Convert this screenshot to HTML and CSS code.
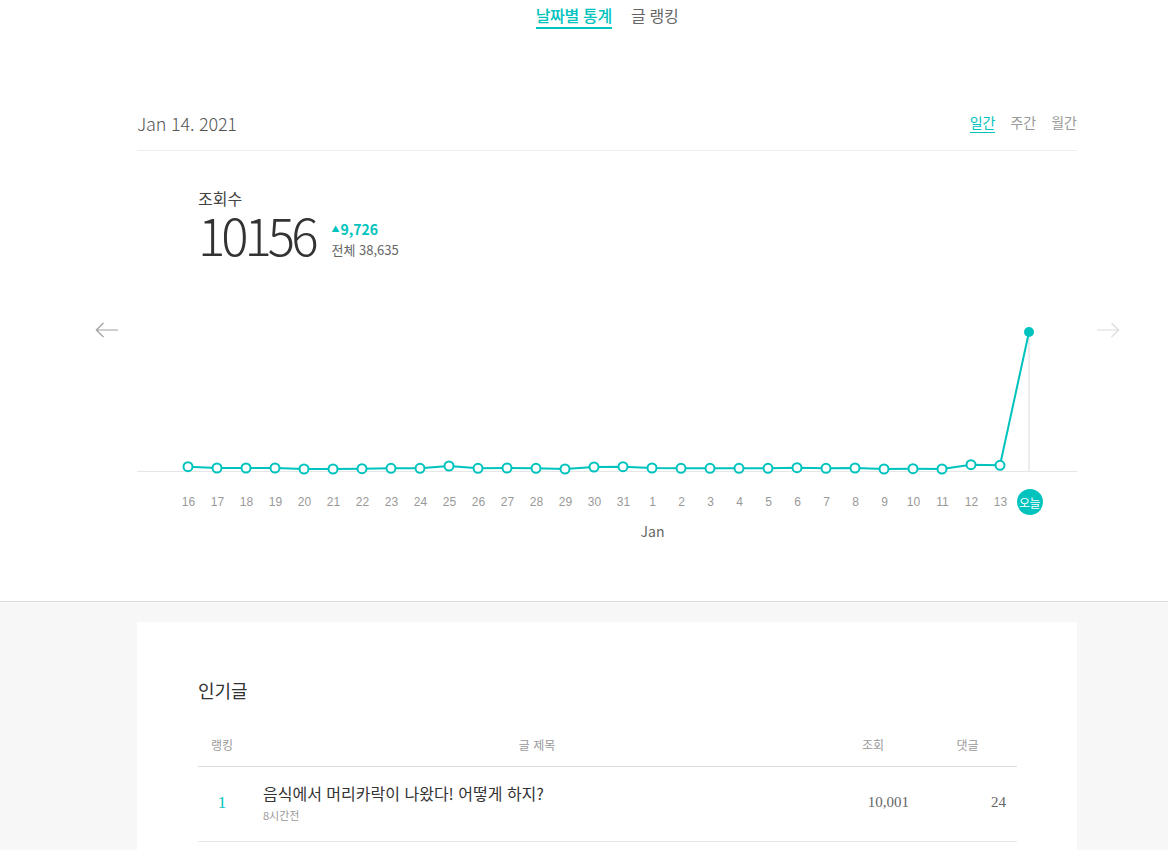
FILE: index.html
```html
<!DOCTYPE html>
<html lang="ko">
<head>
<meta charset="utf-8">
<title>통계</title>
<link rel="stylesheet" href="styles.css">
</head>
<body>
<section class="top">
  <nav class="tabs">
    <a class="tab active">날짜별 통계</a>
    <a class="tab">글 랭킹</a>
  </nav>
  <div class="wrap">
    <div class="head">
      <div class="date">Jan 14. 2021</div>
      <div class="periods">
        <a class="period active">일간</a>
        <a class="period">주간</a>
        <a class="period">월간</a>
      </div>
    </div>
    <div class="stats">
      <div class="stat-label">조회수</div>
      <div class="stat-row">
        <div class="stat-num">10156</div>
        <div class="stat-side">
          <div class="delta"><span class="tri">▲</span>9,726</div>
          <div class="total">전체 38,635</div>
        </div>
      </div>
    </div>
    <div class="chart">
      <svg class="arrow arrow-left" width="24" height="16" viewBox="0 0 24 16"><path d="M1 8H23M8.5 1L1.3 8L8.5 15" fill="none" stroke="#a0a0a0" stroke-width="1.2"/></svg>
      <svg class="arrow arrow-right" width="24" height="16" viewBox="0 0 24 16"><path d="M1 8H23M15.5 1L22.7 8L15.5 15" fill="none" stroke="#dcdcdc" stroke-width="1.2"/></svg>
      <svg class="plot" width="940" height="175" viewBox="0 0 940 175">
        <line x1="0" y1="171.5" x2="940" y2="171.5" stroke="#e6e6e6" stroke-width="1"/>
        <line x1="892" y1="32" x2="892" y2="171" stroke="#e6e6e6" stroke-width="1.5"/>
        <polyline fill="none" stroke="#00c3bd" stroke-width="2" points="51,166.7 80,168 109,168 138,168 167,169 196,169 225,168.7 254,168.3 283,168.3 312,166 341,168.3 370,168 399,168.3 428,169 457,167 486,166.7 515,168 544,168.3 573,168.3 602,168.3 631,168.3 660,167.7 689,168.3 718,168 747,169 776,168.7 805,169 834,164.7 863,165.3 892,32"/>
        <g fill="#fff" stroke="#00c3bd" stroke-width="2">
          <circle cx="51" cy="166.7" r="4.5"/><circle cx="80" cy="168" r="4.5"/><circle cx="109" cy="168" r="4.5"/><circle cx="138" cy="168" r="4.5"/><circle cx="167" cy="169" r="4.5"/><circle cx="196" cy="169" r="4.5"/><circle cx="225" cy="168.7" r="4.5"/><circle cx="254" cy="168.3" r="4.5"/><circle cx="283" cy="168.3" r="4.5"/><circle cx="312" cy="166" r="4.5"/><circle cx="341" cy="168.3" r="4.5"/><circle cx="370" cy="168" r="4.5"/><circle cx="399" cy="168.3" r="4.5"/><circle cx="428" cy="169" r="4.5"/><circle cx="457" cy="167" r="4.5"/><circle cx="486" cy="166.7" r="4.5"/><circle cx="515" cy="168" r="4.5"/><circle cx="544" cy="168.3" r="4.5"/><circle cx="573" cy="168.3" r="4.5"/><circle cx="602" cy="168.3" r="4.5"/><circle cx="631" cy="168.3" r="4.5"/><circle cx="660" cy="167.7" r="4.5"/><circle cx="689" cy="168.3" r="4.5"/><circle cx="718" cy="168" r="4.5"/><circle cx="747" cy="169" r="4.5"/><circle cx="776" cy="168.7" r="4.5"/><circle cx="805" cy="169" r="4.5"/><circle cx="834" cy="164.7" r="4.5"/><circle cx="863" cy="165.3" r="4.5"/>
        </g>
        <circle cx="892" cy="32" r="5" fill="#00c3bd"/>
      </svg>
      <div class="labels">
        <span>16</span><span>17</span><span>18</span><span>19</span><span>20</span><span>21</span><span>22</span><span>23</span><span>24</span><span>25</span><span>26</span><span>27</span><span>28</span><span>29</span><span>30</span><span>31</span><span>1</span><span>2</span><span>3</span><span>4</span><span>5</span><span>6</span><span>7</span><span>8</span><span>9</span><span>10</span><span>11</span><span>12</span><span>13</span><span class="today"><b>오늘</b></span>
        <span class="month">Jan</span>
      </div>
    </div>
  </div>
</section>
<section class="bottom">
  <div class="card">
    <h2 class="card-title">인기글</h2>
    <div class="table">
      <div class="trow thead">
        <div class="c-rank">랭킹</div>
        <div class="c-title">글 제목</div>
        <div class="c-views">조회</div>
        <div class="c-cmt">댓글</div>
      </div>
      <div class="trow tbody">
        <div class="c-rank rank">1</div>
        <div class="c-title post">
          <div class="post-title">음식에서 머리카락이 나왔다! 어떻게 하지?</div>
          <div class="post-time">8시간전</div>
        </div>
        <div class="c-views num">10,001</div>
        <div class="c-cmt num">24</div>
      </div>
    </div>
  </div>
</section>
</body>
</html>
```
FILE: styles.css
```css
* { box-sizing: border-box; }
html, body { margin: 0; padding: 0; background: #fff; }
body {
  font-family: "Noto Sans CJK KR", "Noto Sans", sans-serif;
  color: #333;
  width: 1168px;
  height: 850px;
  overflow: hidden;
}
a { cursor: pointer; }

.tabs {
  width: 940px;
  margin-left: 137px;
  display: flex;
  justify-content: center;
  gap: 19px;
}
.tab {
  font-size: 16px;
  line-height: 22px;
  padding-top: 4px;
  padding-bottom: 1px;
  border-bottom: 2px solid transparent;
  color: #666;
  letter-spacing: -0.3px;
}
.tab.active {
  color: #00c3bd;
  font-weight: 500;
  border-bottom-color: #00c3bd;
}

.wrap {
  width: 940px;
  margin-left: 137px;
}
.head {
  margin-top: 81px;
  display: flex;
  justify-content: space-between;
  align-items: center;
  padding-bottom: 14px;
  border-bottom: 1px solid #eee;
}
.date {
  font-size: 18px;
  line-height: 26px;
  font-weight: 300;
  color: #555;
  letter-spacing: -0.2px;
}
.periods {
  display: flex;
  gap: 15px;
}
.period {
  font-size: 14px;
  line-height: 19px;
  color: #999;
  border-bottom: 1px solid transparent;
}
.period.active {
  color: #00c3bd;
  border-bottom-color: #00c3bd;
}

.stats {
  margin-left: 61px;
  margin-top: 36px;
}
.stat-label {
  font-size: 16px;
  line-height: 22px;
  color: #444;
}
.stat-row {
  display: flex;
  align-items: flex-start;
  margin-top: 3px;
}
.stat-num {
  font-size: 51px;
  line-height: 44px;
  font-weight: 200;
  letter-spacing: -4px;
  color: #333;
}
.stat-side {
  margin-left: 17px;
  margin-top: 7px;
}
.delta {
  font-size: 14px;
  line-height: 20px;
  font-weight: 700;
  color: #00c3bd;
}
.tri {
  font-size: 8px;
  vertical-align: 3px;
  margin-right: 1px;
}
.total {
  font-size: 13px;
  line-height: 20px;
  color: #666;
  margin-top: 1px;
}

.chart {
  position: relative;
  margin-top: 40px;
}
.plot { display: block; }
.arrow { position: absolute; top: 22px; }
.arrow-left { left: -42px; }
.arrow-right { right: -43px; }

.labels {
  margin-top: 14px;
  margin-left: 37px;
  display: grid;
  grid-template-columns: repeat(30, 29px);
  grid-auto-rows: 26px;
  row-gap: 3px;
  align-items: center;
  justify-items: center;
  font-family: "Liberation Sans", Arial, sans-serif;
  font-size: 12px;
  color: #999;
}
.labels .today b {
  display: flex;
  align-items: center;
  justify-content: center;
  width: 26px;
  height: 26px;
  border-radius: 50%;
  background: #00c3bd;
  color: #fff;
  font-family: "Noto Sans CJK KR", sans-serif;
  font-weight: 400;
  font-size: 12px;
  letter-spacing: -0.5px;
}
.labels .month {
  grid-column: 17;
  grid-row: 2;
  font-family: "Noto Sans CJK KR", sans-serif;
  font-size: 14px;
  color: #666;
}

.top {
  height: 602px;
  border-bottom: 1px solid #ddd;
}
.bottom {
  background: #f7f7f7;
  padding-top: 20px;
  height: 248px;
}
.card {
  width: 940px;
  margin-left: 137px;
  background: #fff;
  padding: 55px 60px 0 61px;
  height: 240px;
}
.card-title {
  margin: 0;
  font-size: 18px;
  line-height: 26px;
  font-weight: 400;
  color: #333;
}
.table { margin-top: 33px; }
.trow {
  display: grid;
  grid-template-columns: 48px 582px 90px 99px;
  align-items: center;
  border-bottom: 1px solid #ddd;
}
.thead {
  font-size: 12px;
  line-height: 18px;
  color: #999;
  padding-bottom: 12px;
  text-align: center;
}
.tbody {
  padding: 15px 0 18px;
  border-bottom-color: #e8e8e8;
}
.rank {
  text-align: center;
  font-family: "Liberation Serif", serif;
  font-size: 17px;
  color: #00c3bd;
}
.post { padding-left: 17px; }
.post-title {
  font-size: 16px;
  line-height: 22px;
  color: #333;
}
.post-time {
  margin-top: 3px;
  font-size: 11px;
  line-height: 16px;
  color: #999;
}
.num {
  text-align: right;
  padding-right: 9px;
  font-family: "Liberation Serif", serif;
  font-size: 15px;
  color: #666;
}
.c-cmt.num { padding-right: 11px; }
```
